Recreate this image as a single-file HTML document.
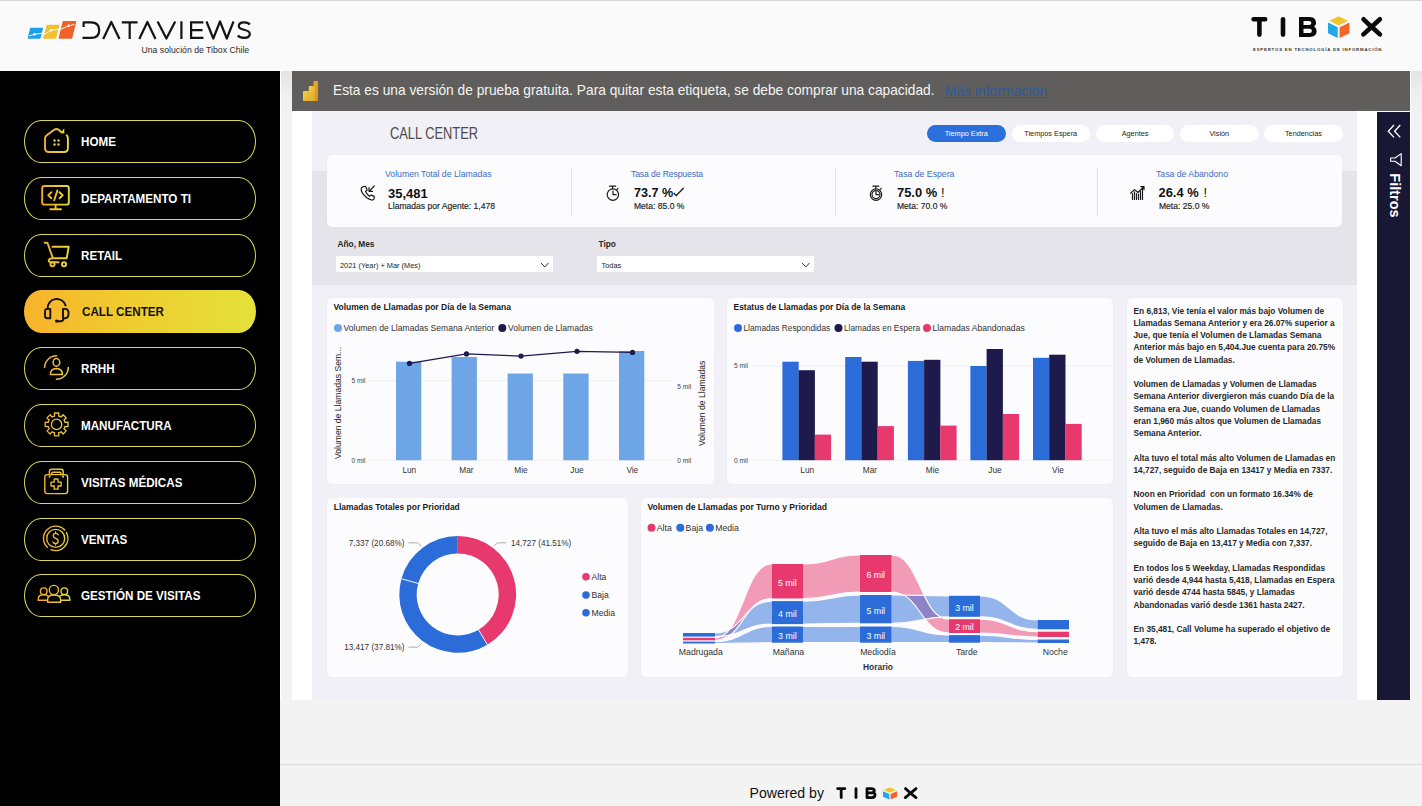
<!DOCTYPE html>
<html><head><meta charset="utf-8">
<style>
*{box-sizing:border-box;margin:0;padding:0}
html,body{width:1422px;height:806px;overflow:hidden}
body{position:relative;background:#f3f3f3;font-family:"Liberation Sans",sans-serif;color:#252423}
.abs{position:absolute}
#header{left:0;top:0;width:1422px;height:71px;background:#fafafa;border-top:1px solid #d6d6d6}
#sidebar{left:0;top:71px;width:280px;height:735px;background:#000}
.btn{position:absolute;left:24px;width:232px;height:43px;border:1.5px solid #dcd85a;border-radius:17px / 21.5px}
.btn .lbl{position:absolute;left:56.4px;top:12.7px;font-weight:bold;font-size:12.6px;color:#fff;white-space:nowrap;line-height:16px;transform-origin:0 50%;transform:scaleX(0.925)}
.btn svg{position:absolute;left:12px;top:4px}
.btn.active{border:none;background:linear-gradient(90deg,#f8b32b 0%,#efcc2f 45%,#e4e23a 100%)}
.btn.active .lbl{color:#111;top:13.5px;left:57.9px}
#stripL{left:280px;top:71px;width:12px;height:629px;background:linear-gradient(180deg,#e4e4e4 0,#f0f0f0 25px,#f3f3f3 60px);border-left:1px solid #fff}
#stripR{left:1410px;top:71px;width:12px;height:629px;background:linear-gradient(180deg,#e4e4e4 0,#f0f0f0 25px,#f3f3f3 60px);border-left:1px solid #fff}
#banner{left:292px;top:71px;width:1118px;height:40px;background:#605e5c}
#report{left:292px;top:111px;width:1118px;height:589px;background:#fff}
#canvas{left:312px;top:111px;width:1045px;height:589px;background:#f1f0f6}
#band{left:312px;top:171px;width:1045px;height:114px;background:#e5e4ea}
#filtros{left:1377px;top:112px;width:33px;height:588px;background:#191834}
#footline{left:280px;top:764px;width:1142px;height:1px;background:#dcdcdc}
.card{position:absolute;background:#fcfcfe;border-radius:5px;box-shadow:0 0 2px rgba(0,0,0,0.04)}
.t{position:absolute;white-space:nowrap;line-height:1}

.tab{position:absolute;top:125px;width:78.5px;height:17px;border-radius:9px;background:#fff;font-size:7.3px;color:#252423;text-align:center;line-height:17px;white-space:nowrap}
.tab.act{background:#2b6fdc;color:#fff}
.kt{top:169.5px;font-size:8.7px;color:#3b6dc2}
.kv{top:187.2px;font-size:12.4px;font-weight:bold;color:#111}
.km{top:202.3px;font-size:8.55px;font-weight:normal;color:#1a1a1a;-webkit-text-stroke:0.15px #1a1a1a}
</style></head>
<body>
<div id="header" class="abs"></div>
<div id="sidebar" class="abs"></div>
<div id="stripL" class="abs"></div>
<div id="stripR" class="abs"></div>
<div id="banner" class="abs"></div>
<div id="report" class="abs"></div>
<div id="canvas" class="abs"></div>
<div id="band" class="abs"></div>
<div id="filtros" class="abs"></div>
<div id="footline" class="abs"></div>

<div class="btn" style="top:120px"><span class="lbl">HOME</span></div>
<div class="btn" style="top:177px"><span class="lbl">DEPARTAMENTO TI</span></div>
<div class="btn" style="top:234px"><span class="lbl">RETAIL</span></div>
<div class="btn active" style="top:290px"><span class="lbl">CALL CENTER</span></div>
<div class="btn" style="top:347px"><span class="lbl">RRHH</span></div>
<div class="btn" style="top:404px"><span class="lbl">MANUFACTURA</span></div>
<div class="btn" style="top:461px"><span class="lbl">VISITAS MÉDICAS</span></div>
<div class="btn" style="top:518px"><span class="lbl">VENTAS</span></div>
<div class="btn" style="top:574px"><span class="lbl">GESTIÓN DE VISITAS</span></div>

<div class="card" style="left:327px;top:155px;width:1015px;height:72px"></div>
<div class="card" style="left:327px;top:298px;width:387px;height:186px"></div>
<div class="card" style="left:727px;top:298px;width:386px;height:186px"></div>
<div class="card" style="left:1127px;top:298px;width:216px;height:379px"></div>
<div class="card" style="left:327px;top:498px;width:301px;height:179px"></div>
<div class="card" style="left:641px;top:498px;width:472px;height:179px"></div>



<!-- SIDEBAR ICONS -->
<svg class="abs" style="left:0;top:0" width="280" height="806" viewBox="0 0 280 806">
 <defs>
  <linearGradient id="gold" gradientUnits="userSpaceOnUse" x1="40" y1="0" x2="71" y2="0">
   <stop offset="0" stop-color="#f2a62c"/><stop offset="1" stop-color="#e3df3c"/>
  </linearGradient>
 </defs>
 <g fill="none" stroke="url(#gold)" stroke-width="1.9" stroke-linecap="round" stroke-linejoin="round">
  <!-- home -->
  <path d="M66.6 135.3 Q67.9 136.4 67.9 138.2 V148 Q67.9 152 63.9 152 H49 Q45 152 45 148 V138.5 Q45 136.5 46.8 135.2 L54.2 129.8 Q56.4 128.2 58.6 129.8 L61.3 131.9"/>
  <!-- monitor -->
  <rect x="42.2" y="186" width="26.6" height="18.6" rx="2.2"/>
  <path d="M55.6 205 V209 M50.3 209.3 H61"/>
  <path d="M51.4 192.2 L48.2 195.2 L51.4 198.2 M57.4 190.4 L54.2 200.2 M59.5 192.2 L62.7 195.2 L59.5 198.2"/>
  <!-- cart -->
  <path d="M44.6 242.8 H47.4 L52.9 258.2"/>
  <path d="M52.4 246.7 H68.7 L66.7 258.2 H52.9 Q48.7 258.4 48.7 260.6 Q48.7 262.3 51 262.3 H58.6"/>
  <circle cx="52.5" cy="264.3" r="2.1"/>
  <circle cx="64" cy="264.3" r="2.1"/>
  <!-- rrhh -->
  <path d="M44.6 367.6 A12 12 0 0 1 56.6 355.7" stroke-width="1.5"/>
  <path d="M68.3 367.4 A12 12 0 0 1 56.4 379.3" stroke-width="1.5"/>
  <ellipse cx="56.4" cy="362.4" rx="3.3" ry="3.8" stroke-width="1.5"/>
  <path d="M50.4 374.6 Q50.2 368.8 56.4 368.4 Q62.6 368.8 62.4 374.6 Z" stroke-width="1.5"/>
  <!-- gear -->
  <path stroke-width="1.3" d="M53.31 416.45 L54.52 416.06 L54.39 413.01 L58.81 413.01 L58.68 416.06 L59.89 416.45 L61.03 417.03 L63.09 414.78 L66.22 417.91 L63.97 419.97 L64.55 421.11 L64.94 422.32 L67.99 422.19 L67.99 426.61 L64.94 426.48 L64.55 427.69 L63.97 428.83 L66.22 430.89 L63.09 434.02 L61.03 431.77 L59.89 432.35 L58.68 432.74 L58.81 435.79 L54.39 435.79 L54.52 432.74 L53.31 432.35 L52.17 431.77 L50.11 434.02 L46.98 430.89 L49.23 428.83 L48.65 427.69 L48.26 426.48 L45.21 426.61 L45.21 422.19 L48.26 422.32 L48.65 421.11 L49.23 419.97 L46.98 417.91 L50.11 414.78 L52.17 417.03 Z"/>
  <circle cx="56.6" cy="424.4" r="5.2" stroke-width="1.3"/>
  <!-- medical bag -->
  <rect x="44.8" y="474.6" width="22.8" height="19" rx="2.6" stroke-width="1.4"/>
  <path d="M49.4 474.6 V471.5 Q49.4 469.3 51.6 469.3 H61 Q63.2 469.3 63.2 471.5 V474.6" stroke-width="1.4"/>
  <path d="M51.6 474.6 V473.6 Q51.6 472.2 53 472.2 H59.6 Q61 472.2 61 473.6 V474.6" stroke-width="1.4"/>
  <path d="M54.2 479 H58 V482.2 H61.2 V486 H58 V489.2 H54.2 V486 H51 V482.2 H54.2 Z" stroke-width="1.3"/>
  <!-- ventas -->
  <path d="M47.38 547.32 A12.2 12.2 0 1 1 64.62 530.08" stroke-width="1.4"/>
  <path d="M66.37 532.49 A12.2 12.2 0 0 1 50.93 549.63" stroke-width="1.4"/>
  <circle cx="55.7" cy="538.4" r="9" stroke-width="1.4"/>
  <path d="M58.2 534.8 Q57.6 533.3 55.6 533.3 Q53.2 533.3 53.2 535.6 Q53.2 537.6 55.6 538.3 Q58.2 539 58.2 541.2 Q58.2 543.5 55.6 543.5 Q53.5 543.5 52.9 542 M55.6 531.8 V533.3 M55.6 543.5 V545" stroke-width="1.3"/>
  <!-- people -->
  <circle cx="53.9" cy="590" r="4.6" stroke-width="1.4"/>
  <path d="M47.6 602.3 V599.5 Q47.6 595 53.9 595 Q60.6 595 60.6 599.5 V602.3 Z" stroke-width="1.4"/>
  <circle cx="43.7" cy="591.2" r="3.3" stroke-width="1.4"/>
  <path d="M38.3 600.2 V598.5 Q38.5 594.8 43.7 594.8 Q46.5 594.8 47.8 596" stroke-width="1.4"/>
  <path d="M38.3 600.2 H47.6" stroke-width="1.4"/>
  <circle cx="64.3" cy="591.2" r="3.3" stroke-width="1.4"/>
  <path d="M69.7 600.2 V598.5 Q69.5 594.8 64.3 594.8 Q61.5 594.8 60.2 596" stroke-width="1.4"/>
  <path d="M69.7 600.2 H60.6" stroke-width="1.4"/>
 </g>
 <g fill="url(#gold)">
  <path d="M64.2 128.3 L64.4 133.6 L60.4 133.2 Z"/>
  <circle cx="54.5" cy="140.6" r="1.25"/><circle cx="58.5" cy="140.6" r="1.25"/>
  <circle cx="54.5" cy="144.6" r="1.25"/><circle cx="58.5" cy="144.6" r="1.25"/>
  <circle cx="49.6" cy="476.6" r="1.1"/><circle cx="63" cy="476.6" r="1.1"/>
 </g>
 <!-- headset -->
 <g fill="none" stroke="#141008" stroke-width="1.9" stroke-linecap="round" stroke-linejoin="round">
  <path d="M47.6 309 A9.2 9.2 0 0 1 65.6 305.6"/>
  <path d="M50.3 308.9 H47.4 Q45 308.9 45 311.3 V315.8 Q45 318.2 47.4 318.2 H50.3 Z"/>
  <path d="M63 308.9 H65 Q68.6 308.9 68.6 313.5 Q68.6 318.2 65 318.2 H63 Z"/>
  <path d="M63.4 318.4 Q63.4 321.2 60.6 321.2 H57.5"/>
 </g>
 <circle cx="56.6" cy="321.1" r="1.6" fill="#141008"/>
</svg>



<!-- REPORT TOP -->
<div class="t" style="left:389.5px;top:125.8px;font-size:16px;color:#4a4a4a;transform-origin:0 0;transform:scaleX(0.803)">CALL CENTER</div>
<div class="tab act" style="left:927px">Tiempo Extra</div>
<div class="tab" style="left:1011.5px">Tiempos Espera</div>
<div class="tab" style="left:1095.8px">Agentes</div>
<div class="tab" style="left:1180px">Visión</div>
<div class="tab" style="left:1264.2px">Tendencias</div>

<div class="abs" style="left:571px;top:168px;width:1px;height:48px;background:#e2e1e6"></div>
<div class="abs" style="left:834.5px;top:168px;width:1px;height:48px;background:#e2e1e6"></div>
<div class="abs" style="left:1096.5px;top:168px;width:1px;height:48px;background:#e2e1e6"></div>

<div class="t kt" style="left:385px">Volumen Total de Llamadas</div>
<div class="t kv" style="left:388px;font-size:13px;top:186.8px">35,481</div>
<div class="t km" style="left:388px">Llamadas por Agente: 1,478</div>

<div class="t kt" style="left:631px;letter-spacing:-0.15px">Tasa de Respuesta</div>
<div class="t kv" style="left:634px;font-size:12.6px">73.7 %</div>
<div class="t km" style="left:634px">Meta: 85.0 %</div>

<div class="t kt" style="left:894px">Tasa de Espera</div>
<div class="t kv" style="left:897px;font-size:12.9px;top:186.9px">75.0 %</div><div class="t kv" style="left:941px;font-size:12.9px;top:186.9px;font-weight:normal">!</div>
<div class="t km" style="left:897px">Meta: 70.0 %</div>

<div class="t kt" style="left:1156px">Tasa de Abandono</div>
<div class="t kv" style="left:1158.5px;font-size:12.9px;top:186.9px">26.4 %</div><div class="t kv" style="left:1203.5px;font-size:12.9px;top:186.9px;font-weight:normal">!</div>
<div class="t km" style="left:1159px">Meta: 25.0 %</div>

<svg class="abs" style="left:350px;top:180px" width="900" height="26" viewBox="350 180 900 26">
 <g fill="none" stroke="#1a1a1a" stroke-width="1.2" stroke-linecap="round" stroke-linejoin="round">
  <!-- phone incoming -->
  <path d="M363.2 186.8 L364.8 186.3 Q365.5 186.2 365.8 186.8 L367 189.6 Q367.2 190.2 366.7 190.6 L365.6 191.4 Q366.8 194.2 369.6 196.3 L370.6 195.3 Q371 194.9 371.6 195.1 L374 196.4 Q374.6 196.8 374.4 197.4 L373.9 199 Q373.4 200.2 371.8 200 Q366.5 199 362.5 193.2 Q360.8 190.4 361.2 188.6 Q361.5 187.3 363.2 186.8 Z"/>
  <path d="M374.3 186 L369 191.3 M369 187.6 V191.3 H372.6"/>
  <!-- stopwatch 1 -->
  <circle cx="612.9" cy="194.6" r="5.7"/>
  <path d="M609.6 186.2 H615.6 M612.6 186.2 V188.8 M616.8 189.7 L618 188.4"/>
  <path d="M613 191.2 V194.6 H616.2"/>
  <!-- stopwatch 2 -->
  <circle cx="876" cy="194.6" r="5.7"/>
  <circle cx="876" cy="194.6" r="4"/>
  <path d="M872.8 186.2 H878.8 M875.8 186.2 V188.8 M880 189.7 L881.2 188.4"/>
  <path d="M876 191.8 V194.6 H878.8"/>
  <!-- chart -->
  <path d="M1130.6 193.2 L1134.5 189.6 L1138 192.5 L1143.8 186.8 M1140.8 186.6 H1144 V189.7"/>
  <path d="M1132.5 199.5 V193.5 M1134.5 199.5 V191.8 M1136.5 199.5 V193.5 M1138.5 199.5 V194 M1140.5 199.5 V191.5 M1142.5 199.5 V189.5"/>
 </g>
 <path d="M673.8 193 L676.2 195.6 L683.6 188" fill="none" stroke="#111" stroke-width="1.3"/>
</svg>

<!-- FILTERS -->
<div class="t" style="left:337.5px;top:240.2px;font-size:8.3px;font-weight:bold;color:#252423">Año, Mes</div>
<div class="abs" style="left:336px;top:256px;width:216.5px;height:16px;background:#fff"></div>
<div class="t" style="left:340px;top:261.5px;font-size:7.4px;color:#252423">2021 (Year) + Mar (Mes)</div>
<div class="t" style="left:598.5px;top:240.2px;font-size:8.3px;font-weight:bold;color:#252423">Tipo</div>
<div class="abs" style="left:597px;top:256px;width:216.5px;height:16px;background:#fff"></div>
<div class="t" style="left:601.5px;top:261.5px;font-size:7.4px;color:#252423">Todas</div>
<svg class="abs" style="left:530px;top:256px" width="290" height="16" viewBox="530 256 290 16">
 <path d="M541 262.9 L544.8 266.9 L548.6 262.9 M802 262.9 L805.8 266.9 L809.6 262.9" fill="none" stroke="#333" stroke-width="1"/>
</svg>

<!-- CHARTS -->
<svg class="abs" style="left:0;top:0" width="1422" height="806" viewBox="0 0 1422 806" font-family="Liberation Sans, sans-serif">
<text x="333.5" y="310.3" font-size="8.5" font-weight="bold" fill="#1b1b1b">Volumen de Llamadas por Día de la Semana</text>
<circle cx="338" cy="328" r="4" fill="#6ea5e7"/><text x="343.5" y="331" font-size="8.57" fill="#333">Volumen de Llamadas Semana Anterior</text>
<circle cx="502.3" cy="328" r="4" fill="#1e1b4c"/><text x="508" y="331" font-size="8.57" fill="#333">Volumen de Llamadas</text>
<text transform="translate(340.5 459) rotate(-90)" font-size="8.6" fill="#252423">Volumen de Llamadas Sem...</text>
<text transform="translate(704.5 446) rotate(-90)" font-size="8.65" fill="#252423">Volumen de Llamadas</text>
<line x1="368" y1="380.7" x2="672" y2="380.7" stroke="#ecebf1" stroke-width="0.8"/>
<line x1="368" y1="460.3" x2="672" y2="460.3" stroke="#ecebf1" stroke-width="0.8"/>
<text x="365.5" y="383" font-size="6.6" fill="#444" text-anchor="end">5 mil</text>
<text x="365.5" y="462.6" font-size="6.6" fill="#444" text-anchor="end">0 mil</text>
<text x="677.3" y="388.8" font-size="6.6" fill="#444">5 mil</text>
<text x="677.3" y="462.6" font-size="6.6" fill="#444">0 mil</text>
<rect x="396" y="361.7" width="25.3" height="98.5" fill="#6ea5e7"/>
<rect x="451.6" y="357" width="25.3" height="103.2" fill="#6ea5e7"/>
<rect x="507.6" y="373.5" width="25.3" height="86.7" fill="#6ea5e7"/>
<rect x="563.3" y="373.5" width="25.3" height="86.7" fill="#6ea5e7"/>
<rect x="619" y="351" width="25.3" height="109.2" fill="#6ea5e7"/>
<polyline points="409.5,363.4 466.5,353.9 521,356.1 577,351.3 632.5,352.4" fill="none" stroke="#1e1b4c" stroke-width="1.3"/>
<circle cx="409.5" cy="363.4" r="2.6" fill="#1e1b4c"/>
<circle cx="466.5" cy="353.9" r="2.6" fill="#1e1b4c"/>
<circle cx="521" cy="356.1" r="2.6" fill="#1e1b4c"/>
<circle cx="577" cy="351.3" r="2.6" fill="#1e1b4c"/>
<circle cx="632.5" cy="352.4" r="2.6" fill="#1e1b4c"/>
<text x="409.3" y="473" font-size="8.3" fill="#333" text-anchor="middle">Lun</text>
<text x="466.4" y="473" font-size="8.3" fill="#333" text-anchor="middle">Mar</text>
<text x="521" y="473" font-size="8.3" fill="#333" text-anchor="middle">Mie</text>
<text x="577" y="473" font-size="8.3" fill="#333" text-anchor="middle">Jue</text>
<text x="632.3" y="473" font-size="8.3" fill="#333" text-anchor="middle">Vie</text>
<text x="733.5" y="310.3" font-size="8.45" font-weight="bold" fill="#1b1b1b">Estatus de Llamadas por Día de la Semana</text>
<circle cx="738" cy="328" r="4" fill="#2b6cd9"/><text x="743.5" y="331" font-size="8.3" fill="#333">Llamadas Respondidas</text>
<circle cx="838.5" cy="328" r="4" fill="#1e1b4c"/><text x="844" y="331" font-size="8.3" fill="#333">Llamadas en Espera</text>
<circle cx="927" cy="328" r="4" fill="#e8396e"/><text x="932.5" y="331" font-size="8.6" fill="#333">Llamadas Abandonadas</text>
<line x1="752" y1="366" x2="1110" y2="366" stroke="#ecebf1" stroke-width="0.8"/>
<line x1="752" y1="460.3" x2="1110" y2="460.3" stroke="#ecebf1" stroke-width="0.8"/>
<text x="734" y="368.4" font-size="6.6" fill="#444">5 mil</text>
<text x="734" y="462.6" font-size="6.6" fill="#444">0 mil</text>
<rect x="782.4" y="361.7" width="16.3" height="98.5" fill="#2b6cd9"/>
<rect x="798.6" y="370.2" width="16.3" height="90.0" fill="#1e1b4c"/>
<rect x="814.8" y="434.6" width="16.3" height="25.6" fill="#e8396e"/>
<rect x="845.2" y="357" width="16.3" height="103.2" fill="#2b6cd9"/>
<rect x="861.4" y="361.7" width="16.3" height="98.5" fill="#1e1b4c"/>
<rect x="877.6" y="426.1" width="16.3" height="34.1" fill="#e8396e"/>
<rect x="907.9" y="360.9" width="16.3" height="99.3" fill="#2b6cd9"/>
<rect x="924.1" y="359.8" width="16.3" height="100.4" fill="#1e1b4c"/>
<rect x="940.3" y="425.6" width="16.3" height="34.6" fill="#e8396e"/>
<rect x="970.4" y="366" width="16.3" height="94.2" fill="#2b6cd9"/>
<rect x="986.6" y="349" width="16.3" height="111.2" fill="#1e1b4c"/>
<rect x="1002.8" y="414" width="16.3" height="46.2" fill="#e8396e"/>
<rect x="1033.0" y="357.8" width="16.3" height="102.4" fill="#2b6cd9"/>
<rect x="1049.2" y="354.7" width="16.3" height="105.5" fill="#1e1b4c"/>
<rect x="1065.4" y="423.9" width="16.3" height="36.3" fill="#e8396e"/>
<text x="807.2" y="473" font-size="8.3" fill="#333" text-anchor="middle">Lun</text>
<text x="870" y="473" font-size="8.3" fill="#333" text-anchor="middle">Mar</text>
<text x="932.5" y="473" font-size="8.3" fill="#333" text-anchor="middle">Mie</text>
<text x="995" y="473" font-size="8.3" fill="#333" text-anchor="middle">Jue</text>
<text x="1058" y="473" font-size="8.3" fill="#333" text-anchor="middle">Vie</text>
<text x="333.8" y="510.4" font-size="8.47" font-weight="bold" fill="#1b1b1b">Llamadas Totales por Prioridad</text>
<path d="M457.70 536.00 A58.4 58.4 0 0 1 487.40 644.69 L478.55 629.70 A41 41 0 0 0 457.70 553.40 Z" fill="#e8396e"/>
<path d="M487.40 644.69 A58.4 58.4 0 0 1 401.44 578.74 L418.20 583.41 A41 41 0 0 0 478.55 629.70 Z" fill="#2b6cd9"/>
<path d="M401.44 578.74 A58.4 58.4 0 0 1 457.70 536.00 L457.70 553.40 A41 41 0 0 0 418.20 583.41 Z" fill="#2b6cd9"/>

<line x1="478.04" y1="628.84" x2="487.90" y2="645.55" stroke="#fcfcfe" stroke-width="0.9"/>
<line x1="419.16" y1="583.68" x2="400.47" y2="578.47" stroke="#fcfcfe" stroke-width="0.9"/>
<polyline points="493.8,546.4 497.5,542.8 506,542.8" fill="none" stroke="#999" stroke-width="0.8"/>
<polyline points="421.5,546.4 418,542.8 408.5,542.8" fill="none" stroke="#999" stroke-width="0.8"/>
<polyline points="421.5,643.5 418,647.2 408.5,647.2" fill="none" stroke="#999" stroke-width="0.8"/>
<text x="511" y="545.8" font-size="8.16" fill="#333">14,727 (41.51%)</text>
<text x="404.5" y="545.8" font-size="8.16" fill="#333" text-anchor="end">7,337 (20.68%)</text>
<text x="404.5" y="650.3" font-size="8.16" fill="#333" text-anchor="end">13,417 (37.81%)</text>
<circle cx="586" cy="576.8" r="3.8" fill="#e8396e"/><text x="591.5" y="579.8" font-size="8.6" fill="#333">Alta</text>
<circle cx="586" cy="595" r="3.8" fill="#2b6cd9"/><text x="591.5" y="598" font-size="8.6" fill="#333">Baja</text>
<circle cx="586" cy="612.8" r="3.8" fill="#2b6cd9"/><text x="591.5" y="615.8" font-size="8.6" fill="#333">Media</text>
</svg>
<svg class="abs" style="left:0;top:0" width="1422" height="806" viewBox="0 0 1422 806" font-family="Liberation Sans, sans-serif">
<text x="647.4" y="510.4" font-size="8.6" font-weight="bold" fill="#1b1b1b">Volumen de Llamadas por Turno y Prioridad</text>
<circle cx="651.5" cy="527.8" r="4" fill="#e8396e"/><text x="656.8" y="530.8" font-size="8.7" fill="#333">Alta</text>
<circle cx="680.3" cy="527.8" r="4" fill="#2b6cd9"/><text x="685.5999999999999" y="530.8" font-size="8.7" fill="#333">Baja</text>
<circle cx="709.9" cy="527.8" r="4" fill="#2b6cd9"/><text x="715.1999999999999" y="530.8" font-size="8.7" fill="#333">Media</text>
<path d="M715 637.8 C743.4 637.8 743.4 564 771.8 564 L771.8 598.5 C743.4 598.5 743.4 640.3 715 640.3 Z" fill="#e8396e" fill-opacity="0.5"/>
<path d="M803 564 C831.5 564 831.5 555 860 555 L860 592 C831.5 592 831.5 598.5 803 598.5 Z" fill="#e8396e" fill-opacity="0.5"/>
<path d="M891.6 555 C920.3 555 920.3 619.2 949 619.2 L949 633 C920.3 633 920.3 592 891.6 592 Z" fill="#e8396e" fill-opacity="0.5"/>
<path d="M980 619.2 C1008.85 619.2 1008.85 631.7 1037.7 631.7 L1037.7 637 C1008.85 637 1008.85 633 980 633 Z" fill="#e8396e" fill-opacity="0.5"/>
<path d="M715 641.6 C743.4 641.6 743.4 626.5 771.8 626.5 L771.8 642.7 C743.4 642.7 743.4 643.5 715 643.5 Z" fill="#2b6cd9" fill-opacity="0.5"/>
<path d="M803 626.5 C831.5 626.5 831.5 626.5 860 626.5 L860 642.7 C831.5 642.7 831.5 642.7 803 642.7 Z" fill="#2b6cd9" fill-opacity="0.5"/>
<path d="M891.6 626.5 C920.3 626.5 920.3 635.1 949 635.1 L949 642.7 C920.3 642.7 920.3 642.7 891.6 642.7 Z" fill="#2b6cd9" fill-opacity="0.5"/>
<path d="M980 635.1 C1008.85 635.1 1008.85 639.5 1037.7 639.5 L1037.7 643 C1008.85 643 1008.85 642.7 980 642.7 Z" fill="#2b6cd9" fill-opacity="0.5"/>
<path d="M715 633 C743.4 633 743.4 601.1 771.8 601.1 L771.8 624.1 C743.4 624.1 743.4 636.6 715 636.6 Z" fill="#2b6cd9" fill-opacity="0.5"/>
<path d="M803 601.1 C831.5 601.1 831.5 595 860 595 L860 623.3 C831.5 623.3 831.5 624.1 803 624.1 Z" fill="#2b6cd9" fill-opacity="0.5"/>
<path d="M891.6 595 C920.3 595 920.3 595.8 949 595.8 L949 616.8 C920.3 616.8 920.3 623.3 891.6 623.3 Z" fill="#2b6cd9" fill-opacity="0.5"/>
<path d="M980 595.8 C1008.85 595.8 1008.85 620 1037.7 620 L1037.7 629.3 C1008.85 629.3 1008.85 616.8 980 616.8 Z" fill="#2b6cd9" fill-opacity="0.5"/>
<path d="M715 641.6 C743.4 641.6 743.4 626.5 771.8 626.5" fill="none" stroke="#fcfcfe" stroke-width="1.2"/>
<path d="M715 643.5 C743.4 643.5 743.4 642.7 771.8 642.7" fill="none" stroke="#fcfcfe" stroke-width="1.2"/>
<path d="M803 626.5 C831.5 626.5 831.5 626.5 860 626.5" fill="none" stroke="#fcfcfe" stroke-width="1.2"/>
<path d="M803 642.7 C831.5 642.7 831.5 642.7 860 642.7" fill="none" stroke="#fcfcfe" stroke-width="1.2"/>
<path d="M891.6 626.5 C920.3 626.5 920.3 635.1 949 635.1" fill="none" stroke="#fcfcfe" stroke-width="1.2"/>
<path d="M891.6 642.7 C920.3 642.7 920.3 642.7 949 642.7" fill="none" stroke="#fcfcfe" stroke-width="1.2"/>
<path d="M980 635.1 C1008.85 635.1 1008.85 639.5 1037.7 639.5" fill="none" stroke="#fcfcfe" stroke-width="1.2"/>
<path d="M980 642.7 C1008.85 642.7 1008.85 643 1037.7 643" fill="none" stroke="#fcfcfe" stroke-width="1.2"/>
<path d="M715 633 C743.4 633 743.4 601.1 771.8 601.1" fill="none" stroke="#fcfcfe" stroke-width="1.2"/>
<path d="M715 636.6 C743.4 636.6 743.4 624.1 771.8 624.1" fill="none" stroke="#fcfcfe" stroke-width="1.2"/>
<path d="M803 601.1 C831.5 601.1 831.5 595 860 595" fill="none" stroke="#fcfcfe" stroke-width="1.2"/>
<path d="M803 624.1 C831.5 624.1 831.5 623.3 860 623.3" fill="none" stroke="#fcfcfe" stroke-width="1.2"/>
<path d="M891.6 595 C920.3 595 920.3 595.8 949 595.8" fill="none" stroke="#fcfcfe" stroke-width="1.2"/>
<path d="M891.6 623.3 C920.3 623.3 920.3 616.8 949 616.8" fill="none" stroke="#fcfcfe" stroke-width="1.2"/>
<path d="M980 595.8 C1008.85 595.8 1008.85 620 1037.7 620" fill="none" stroke="#fcfcfe" stroke-width="1.2"/>
<path d="M980 616.8 C1008.85 616.8 1008.85 629.3 1037.7 629.3" fill="none" stroke="#fcfcfe" stroke-width="1.2"/>
<path d="M715 637.8 C743.4 637.8 743.4 564 771.8 564" fill="none" stroke="#fcfcfe" stroke-width="1.2"/>
<path d="M715 640.3 C743.4 640.3 743.4 598.5 771.8 598.5" fill="none" stroke="#fcfcfe" stroke-width="1.2"/>
<path d="M803 564 C831.5 564 831.5 555 860 555" fill="none" stroke="#fcfcfe" stroke-width="1.2"/>
<path d="M803 598.5 C831.5 598.5 831.5 592 860 592" fill="none" stroke="#fcfcfe" stroke-width="1.2"/>
<path d="M891.6 555 C920.3 555 920.3 619.2 949 619.2" fill="none" stroke="#fcfcfe" stroke-width="1.2"/>
<path d="M891.6 592 C920.3 592 920.3 633 949 633" fill="none" stroke="#fcfcfe" stroke-width="1.2"/>
<path d="M980 619.2 C1008.85 619.2 1008.85 631.7 1037.7 631.7" fill="none" stroke="#fcfcfe" stroke-width="1.2"/>
<path d="M980 633 C1008.85 633 1008.85 637 1037.7 637" fill="none" stroke="#fcfcfe" stroke-width="1.2"/>
<rect x="683" y="633" width="32.0" height="3.6" fill="#2b6cd9"/>
<rect x="683" y="637.8" width="32.0" height="2.5" fill="#e8396e"/>
<rect x="683" y="641.6" width="32.0" height="1.9" fill="#2b6cd9"/>
<rect x="771.8" y="564" width="31.2" height="34.5" fill="#e8396e"/>
<rect x="771.8" y="601.1" width="31.2" height="23.0" fill="#2b6cd9"/>
<rect x="771.8" y="626.5" width="31.2" height="16.2" fill="#2b6cd9"/>
<rect x="860" y="555" width="31.6" height="37.0" fill="#e8396e"/>
<rect x="860" y="595" width="31.6" height="28.3" fill="#2b6cd9"/>
<rect x="860" y="626.5" width="31.6" height="16.2" fill="#2b6cd9"/>
<rect x="949" y="595.8" width="31.0" height="21.0" fill="#2b6cd9"/>
<rect x="949" y="619.2" width="31.0" height="13.8" fill="#e8396e"/>
<rect x="949" y="635.1" width="31.0" height="7.6" fill="#2b6cd9"/>
<rect x="1037.7" y="620" width="31.3" height="9.3" fill="#2b6cd9"/>
<rect x="1037.7" y="631.7" width="31.3" height="5.3" fill="#e8396e"/>
<rect x="1037.7" y="639.5" width="31.3" height="3.5" fill="#2b6cd9"/>
<text x="787.4" y="585.9" font-size="8.8" fill="#fff" text-anchor="middle">5 mil</text>
<text x="787.4" y="617" font-size="8.8" fill="#fff" text-anchor="middle">4 mil</text>
<text x="787.4" y="639.2" font-size="8.8" fill="#fff" text-anchor="middle">3 mil</text>
<text x="875.8" y="577.8" font-size="8.8" fill="#fff" text-anchor="middle">6 mil</text>
<text x="875.8" y="614.2" font-size="8.8" fill="#fff" text-anchor="middle">5 mil</text>
<text x="875.8" y="639.2" font-size="8.8" fill="#fff" text-anchor="middle">3 mil</text>
<text x="964.5" y="610.9" font-size="8.8" fill="#fff" text-anchor="middle">3 mil</text>
<text x="964.5" y="630" font-size="8.8" fill="#fff" text-anchor="middle">2 mil</text>
<text x="700.8" y="655" font-size="8.7" fill="#333" text-anchor="middle">Madrugada</text>
<text x="788.5" y="655" font-size="8.7" fill="#333" text-anchor="middle">Mañana</text>
<text x="878" y="655" font-size="8.7" fill="#333" text-anchor="middle">Mediodía</text>
<text x="966.8" y="655" font-size="8.7" fill="#333" text-anchor="middle">Tarde</text>
<text x="1055.2" y="655" font-size="8.7" fill="#333" text-anchor="middle">Noche</text>
<text x="878" y="669.5" font-size="8.44" font-weight="bold" fill="#333" text-anchor="middle">Horario</text>
</svg>
<div class="abs" style="left:1133.5px;top:304.6px;font-size:8.3px;line-height:12.25px;font-weight:bold;color:#2a2928;white-space:nowrap">En 6,813, Vie tenía el valor más bajo Volumen de<br>Llamadas Semana Anterior y era 26.07% superior a<br>Jue, que tenía el Volumen de Llamadas Semana<br>Anterior más bajo en 5,404.Jue cuenta para 20.75%<br>de Volumen de Llamadas.<br>&nbsp;<br>Volumen de Llamadas y Volumen de Llamadas<br>Semana Anterior divergieron más cuando Día de la<br>Semana era Jue, cuando Volumen de Llamadas<br>eran 1,960 más altos que Volumen de Llamadas<br>Semana Anterior.<br>&nbsp;<br>Alta tuvo el total más alto Volumen de Llamadas en<br>14,727, seguido de Baja en 13417 y Media en 7337.<br>&nbsp;<br>Noon en Prioridad &nbsp;con un formato 16.34% de<br>Volumen de Llamadas.<br>&nbsp;<br>Alta tuvo el más alto Llamadas Totales en 14,727,<br>seguido de Baja en 13,417 y Media con 7,337.<br>&nbsp;<br>En todos los 5 Weekday, Llamadas Respondidas<br>varió desde 4,944 hasta 5,418, Llamadas en Espera<br>varió desde 4744 hasta 5845, y Llamadas<br>Abandonadas varió desde 1361 hasta 2427.<br>&nbsp;<br>En 35,481, Call Volume ha superado el objetivo de<br>1,478.</div>

<!-- FILTROS PANEL -->
<svg class="abs" style="left:1377px;top:112px" width="33" height="120" viewBox="1377 112 33 120">
 <path d="M1394 125 L1388.3 131.2 L1394 137.4 M1400.3 125 L1394.6 131.2 L1400.3 137.4" fill="none" stroke="#fff" stroke-width="1.3"/>
 <path d="M1401.2 153.6 V165.7 L1395 161.2 H1390.6 V158 H1395 Z" fill="none" stroke="#fff" stroke-width="1.1" stroke-linejoin="round"/>
</svg>
<div class="t" style="left:1388.5px;top:174px;font-size:14.5px;font-weight:bold;color:#fff;transform-origin:0 0;transform:translate(13px,-0.7px) rotate(90deg)">Filtros</div>

<!-- BANNER -->
<svg class="abs" style="left:300px;top:78px" width="22" height="26" viewBox="300 78 22 26">
 <defs>
  <linearGradient id="pb1" x1="0" y1="0" x2="1" y2="1"><stop offset="0" stop-color="#f5d54a"/><stop offset="1" stop-color="#e3a82a"/></linearGradient>
  <linearGradient id="pb2" x1="0" y1="0" x2="1" y2="1"><stop offset="0" stop-color="#f1cf45"/><stop offset="1" stop-color="#e0a52a"/></linearGradient>
  <linearGradient id="pb3" x1="0" y1="0" x2="1" y2="1"><stop offset="0" stop-color="#e8b033"/><stop offset="1" stop-color="#d38b22"/></linearGradient>
 </defs>
 <rect x="313.5" y="81" width="4.6" height="20" rx="0.8" fill="url(#pb3)"/>
 <rect x="308.8" y="86" width="6" height="15" rx="0.8" fill="url(#pb2)"/>
 <rect x="303" y="91" width="7" height="10" rx="0.8" fill="url(#pb1)"/>
</svg>
<div class="t" style="left:333px;top:84px;font-size:13.75px;color:#f5f4f2">Esta es una versión de prueba gratuita. Para quitar esta etiqueta, se debe comprar una capacidad.</div>
<div class="t" style="left:944.5px;top:84px;font-size:14px;color:#2b5b9e;text-decoration:underline">Más información</div>

<!-- HEADER LOGOS -->
<svg class="abs" style="left:0;top:0" width="420" height="71" viewBox="0 0 420 71">
 <g>
  <path d="M30.2 27.7 H42.3 Q43.3 27.7 43 28.7 L40.6 37.8 Q40.3 38.7 39.3 38.7 H28.5 Q27.5 38.7 27.8 37.7 Z" fill="#1ea0e6"/>
  <path d="M46.8 24.8 H58.6 Q59.6 24.8 59.3 25.8 L56.3 37.8 Q56 38.7 55 38.7 H44 Q43 38.7 43.3 37.7 Z" fill="#f2c12e"/>
  <path d="M62.8 21 H75.6 Q76.6 21 76.3 22 L72.3 37.8 Q72 38.7 71 38.7 H59.4 Q58.4 38.7 58.7 37.7 Z" fill="#f2602a"/>
  <polyline points="29,36 34.5,34.3 42,33.2" fill="none" stroke="#fff" stroke-width="0.9"/>
  <circle cx="34.5" cy="34.3" r="1.2" fill="#fff"/>
  <polyline points="44.5,34.5 51,30.3 58.5,29.5" fill="none" stroke="#fff" stroke-width="0.9"/>
  <circle cx="51" cy="30.3" r="1.2" fill="#fff"/>
  <polyline points="60,29.5 68.8,25.8 74.5,24.3" fill="none" stroke="#fff" stroke-width="0.9"/>
  <circle cx="68.8" cy="25.8" r="1.2" fill="#fff"/>
 </g>
 <g fill="none" stroke="#141414" stroke-width="2.2" stroke-linejoin="round">
  <path d="M83.6 27 V22.4 H91 C97.5 22.4 99.2 26.5 99.2 30.2 C99.2 34 97.5 37.9 91 37.9 H82.5"/>
  <path d="M103.2 39 L111.3 22 L119.5 39"/>
  <path d="M121.8 22.4 H137.6 M129.7 22.4 V39"/>
  <path d="M139.3 39 L147.4 22 L155.5 39"/>
  <path d="M157.6 21.5 L166.4 38.5 L175.2 21.5"/>
  <path d="M181.4 21.3 V39"/>
  <path d="M190 22.4 H203.4 M191.1 22.4 V39 M190 30.2 H202.5 M190 37.9 H203.4"/>
  <path d="M206.5 21.5 L213.3 38.5 L220 21.5 L226.8 38.5 L233.5 21.5"/>
  <path d="M249.8 24.5 C248 22 245.5 22.3 243.8 22.3 C240.5 22.3 238.8 24 238.8 26.3 C238.8 31 249.8 28.5 249.8 33.8 C249.8 36.5 247.5 37.9 244 37.9 C241.5 37.9 239.3 37.3 237.8 35.5"/>
 </g>
</svg>
<div class="t" style="left:141.5px;top:46.3px;font-size:8.7px;color:#2a2a2a">Una solución de Tibox Chile</div>

<svg class="abs" style="left:1240px;top:0" width="160" height="71" viewBox="1240 0 160 71">
 <g fill="none" stroke="#0a0a0a" stroke-width="4.6" stroke-linecap="round" stroke-linejoin="round">
  <path d="M1253.6 19.2 H1265.2 M1259.4 19.2 V34.6"/>
  <path d="M1283 19.2 V34.6"/>
 </g>
 <path d="M1299 17 H1309.5 C1314.5 17 1316 20 1316 22.8 C1316 24.8 1315 26 1314 26.7 C1315.8 27.5 1316.6 29.5 1316.6 31.3 C1316.6 34.5 1314.5 37 1309.5 37 H1299 Z M1303.5 21 V25 H1309 C1310.5 25 1311.3 24.2 1311.3 23 C1311.3 21.8 1310.5 21 1309 21 Z M1303.5 28.8 V33 H1309.5 C1311 33 1311.8 32 1311.8 30.9 C1311.8 29.7 1311 28.8 1309.5 28.8 Z" fill="#0a0a0a" fill-rule="evenodd"/>
 <path d="M1338.6 16.2 L1348 20.8 L1338.6 25.5 L1329.2 20.8 Z" fill="#f4c430"/>
 <path d="M1328 22.5 L1337.7 27.2 V38 L1328 33.3 Z" fill="#22a6e8"/>
 <path d="M1349.5 22.5 L1339.6 27.2 V38 L1349.5 33.3 Z" fill="#f2642c"/>
 <g fill="none" stroke="#0a0a0a" stroke-width="4.6" stroke-linecap="round">
  <path d="M1379.9 19.3 L1363.4 34.4"/>
  <path d="M1363.6 19.3 L1370.5 26"/>
  <path d="M1373.5 28.5 L1379.9 34.4"/>
 </g>
</svg>
<div class="t" style="left:1253px;top:48.2px;font-size:4.3px;font-weight:bold;color:#333;letter-spacing:0.81px">EXPERTOS EN TECNOLOGÍA DE INFORMACIÓN</div>

<!-- FOOTER -->
<div class="t" style="left:749.5px;top:786px;font-size:14.1px;color:#111">Powered by</div>
<svg class="abs" style="left:830px;top:780px" width="95" height="26" viewBox="830 780 95 26">
 <g fill="none" stroke="#0a0a0a" stroke-width="2.8" stroke-linecap="round" stroke-linejoin="round">
  <path d="M837.6 788.6 H844.9 M841.2 788.6 V797.6"/>
  <path d="M856 788.6 V797.6"/>
  <path d="M867 788.6 V797.6 H872 C874.5 797.6 875 795.7 875 794.5 C875 793 874 792.8 872 792.8 H867 M867 788.6 H871.5 C873.8 788.6 874.3 789.8 874.3 790.7 C874.3 792 873.5 792.8 871.5 792.8"/>
  <path d="M916 788.6 L905.3 797.6"/>
  <path d="M905.5 788.6 L909.3 792"/>
  <path d="M912.2 794.6 L916 797.6"/>
 </g>
 <path d="M889.9 787.2 L896 790 L889.9 792.8 L883.8 790 Z" fill="#f4c430"/>
 <path d="M883 791.3 L889.3 794.1 V799.5 L883 796.7 Z" fill="#22a6e8"/>
 <path d="M897 791.3 L890.6 794.1 V799.5 L897 796.7 Z" fill="#f2642c"/>
</svg>

</body></html>
